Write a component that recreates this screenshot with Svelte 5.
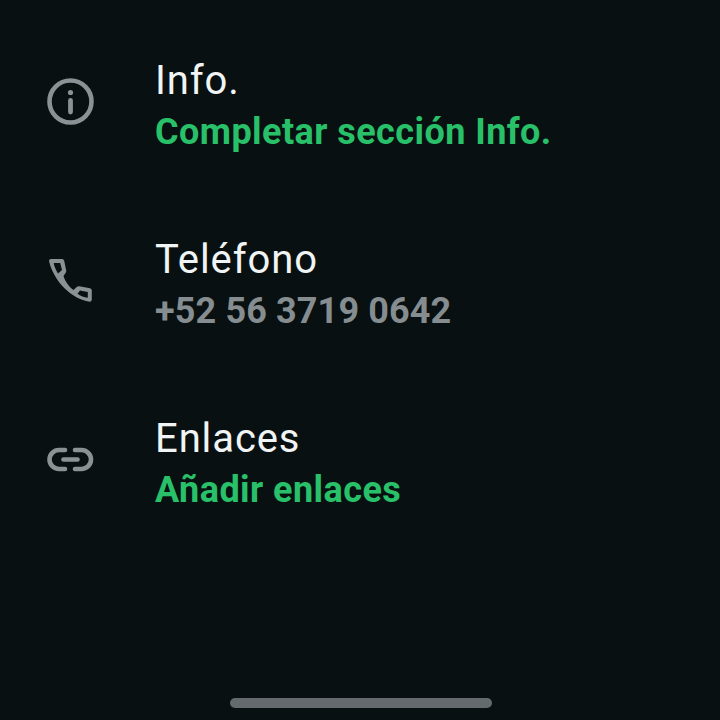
<script>
  const rows = [
    { title: 'Info.', sub: 'Completar sección Info.', accent: true, icon: 'info' },
    { title: 'Teléfono', sub: '+52 56 3719 0642', accent: false, icon: 'phone' },
    { title: 'Enlaces', sub: 'Añadir enlaces', accent: true, icon: 'link' }
  ];
</script>

<main class="screen">
  <ul class="list">
    {#each rows as row}
      <li class="row">
        <span class="icon">
          {#if row.icon === 'info'}
            <svg viewBox="0 0 48 48" width="48" height="48">
              <circle cx="23.500" cy="24.500" r="21" fill="none" stroke="#8a9295" stroke-width="4.600" />
              <circle cx="23.500" cy="15.500" r="2.600" fill="#8a9295" />
              <path d="M23.500 23.500v11.500" stroke="#8a9295" stroke-width="4.800" stroke-linecap="round" fill="none" />
            </svg>
          {:else if row.icon === 'phone'}
            <svg viewBox="0 0 48 48" width="48" height="48">
              <path fill="#8a9295" fill-rule="evenodd" d="M4 3H15Q16.800 3 17.200 4.800L19.200 14.500Q19.500 16 18.500 17L16.500 20C18 25 22 31 26.500 34L30 30.800Q31 30 32.300 30.200L43 32.200Q44.800 32.600 44.800 34.400V43.500Q44.800 45.800 42.500 45.800C25 43 7 26 2 5Q2 3 4 3ZM6.700 7H13.200L15 14L11 17.500C9 14 7.200 10.500 6.700 7ZM33 34.500L40.800 36V41.800C37 41.500 33.500 40 30.500 37.800Z" />
            </svg>
          {:else}
            <svg viewBox="0 0 48 48" width="48" height="48">
              <path d="M18 15H12a9.500 9.500 0 0 0 0 19h6M28 15h6.500a9.500 9.500 0 0 1 0 19H28" fill="none" stroke="#8a9295" stroke-width="4.600" stroke-linecap="round" />
              <path d="M16.500 24.500h14" stroke="#8a9295" stroke-width="4.600" stroke-linecap="round" />
            </svg>
          {/if}
        </span>
        <div class="text">
          <div class="title">{row.title}</div>
          <div class="sub" class:accent={row.accent}>{row.sub}</div>
        </div>
      </li>
    {/each}
  </ul>
  <div class="home"></div>
</main>

<style>
  :global(body) {
    margin: 0;
    background: #081011;
  }
  .screen {
    width: 720px;
    height: 720px;
    background: #081011;
    display: flex;
    flex-direction: column;
    font-family: Roboto, "Liberation Sans", sans-serif;
    overflow: hidden;
  }
  .list {
    list-style: none;
    margin: 0;
    padding: 57px 0 0 47px;
    display: flex;
    flex-direction: column;
    gap: 79px;
    flex: 1;
  }
  .row {
    display: flex;
    align-items: flex-start;
    gap: 60px;
    height: 100px;
  }
  .icon {
    width: 48px;
    height: 48px;
    flex: none;
    display: flex;
    margin-top: 20px;
  }
  .text {
    display: flex;
    flex-direction: column;
    gap: 7px;
  }
  .title {
    color: #f1f4f4;
    font-size: 40px;
    font-weight: 400;
    line-height: 47px;
    letter-spacing: 0.9px;
  }
  .sub {
    color: #858d90;
    font-size: 36px;
    font-weight: 700;
    line-height: 42px;
    letter-spacing: 0.13px;
  }
  .accent {
    color: #29c06a;
    letter-spacing: 0.44px;
  }
  .home {
    width: 262px;
    height: 10px;
    border-radius: 5px;
    background: #646a6d;
    align-self: center;
    margin: 0 0 12px 2px;
    flex: none;
  }
</style>
